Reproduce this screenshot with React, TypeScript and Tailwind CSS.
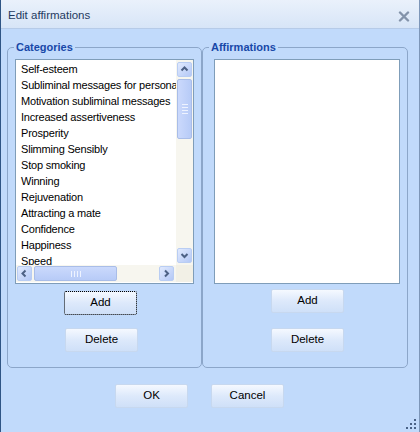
import React from "react";

const CATEGORIES = [
  "Self-esteem",
  "Subliminal messages for personal growth",
  "Motivation subliminal messages",
  "Increased assertiveness",
  "Prosperity",
  "Slimming Sensibly",
  "Stop smoking",
  "Winning",
  "Rejuvenation",
  "Attracting a mate",
  "Confidence",
  "Happiness",
  "Speed",
];

const FONT = "font-['Tahoma','Liberation_Sans',sans-serif]";

function Arrow({ dir }: { dir: "up" | "down" | "left" | "right" }) {
  const paths: Record<string, string> = {
    up: "M2.5 6.5 L5.5 3.5 L8.5 6.5",
    down: "M2.5 4 L5.5 7 L8.5 4",
    left: "M6.5 2.5 L3.5 5.5 L6.5 8.5",
    right: "M4 2.5 L7 5.5 L4 8.5",
  };
  return (
    <svg width="11" height="11" viewBox="0 0 11 11">
      <path d={paths[dir]} fill="none" stroke="#4d6185" strokeWidth="2" />
    </svg>
  );
}

function ScrollBtn({ dir }: { dir: "up" | "down" | "left" | "right" }) {
  return (
    <div className="w-[15px] h-[15px] shrink-0 flex items-center justify-center rounded-[2px] border border-[#b9cdf3] bg-gradient-to-br from-[#e1eafe] to-[#b4c8f6]">
      <Arrow dir={dir} />
    </div>
  );
}

function Button({ label, focused }: { label: string; focused?: boolean }) {
  return (
    <button
      className={`block w-[73px] h-[24px] shrink-0 rounded-[2px] border border-[#c7d8ef] bg-gradient-to-b from-[#f5f9ff] via-[#dde9fb] to-[#cfe0f8] text-[11.5px] text-black ${FONT} ${
        focused ? "outline outline-1 outline-dotted outline-black -outline-offset-1" : ""
      }`}
    >
      {label}
    </button>
  );
}

function Group({
  title,
  children,
}: {
  title: string;
  children: React.ReactNode;
}) {
  return (
    <fieldset className="h-[328px] border border-[#8ca6c9] rounded-[5px] px-0">
      <legend
        className={`ml-[6px] px-[2px] text-[11px] leading-[14px] font-bold text-[#1848a8] ${FONT}`}
      >
        {title}
      </legend>
      {children}
    </fieldset>
  );
}

export default function App() {
  return (
    <div className="w-[420px] h-[432px] flex flex-col bg-[#c1dafb] border-l border-l-[#2f5585] border-r border-r-[#7d96b8] overflow-hidden relative">
      {/* title bar */}
      <div className="h-[29px] shrink-0 flex items-center justify-between pt-[4px] pl-[7px] pr-[9px] bg-gradient-to-b from-[#eaf1fb] to-[#d7e5f7] border-b border-[#b6cbe8]">
        <span className={`text-[11.5px] text-[#1f3a60] ${FONT}`}>
          Edit affirmations
        </span>
        <svg width="12" height="11" viewBox="0 0 12 11">
          <path
            d="M2 1.5 L10 9.5 M10 1.5 L2 9.5"
            stroke="#8393aa"
            strokeWidth="2.4"
            strokeLinecap="round"
          />
        </svg>
      </div>

      <div className="flex pl-[6px] pr-[11px] pt-[11px]">
        <div className="w-[195px]">
          <Group title="Categories">
            <div className="flex flex-col items-start pl-[7px]">
              <div className="mt-[5px] w-[179px] h-[225px] border border-[#7f9db9] bg-white flex flex-col">
                <div className="flex h-[205px]">
                  <div
                    className={`w-[160px] overflow-hidden pl-[5px] pt-[1px] text-[11px] tracking-[-0.2px] leading-[16px] text-black ${FONT}`}
                  >
                    {CATEGORIES.map((c) => (
                      <div key={c} className="whitespace-nowrap h-[16px]">
                        {c}
                      </div>
                    ))}
                  </div>
                  <div className="w-[17px] bg-[#f7f6ef] flex flex-col items-center pt-[2px] pb-[2px]">
                    <ScrollBtn dir="up" />
                    <div className="mt-[2px] w-[15px] h-[60px] rounded-[2px] border border-[#a9bde8] bg-gradient-to-r from-[#cbd9fc] to-[#b7cbf7] flex flex-col items-center justify-center gap-[2px]">
                      <div className="w-[6px] h-[1px] bg-[#eef3ff]" />
                      <div className="w-[6px] h-[1px] bg-[#eef3ff]" />
                      <div className="w-[6px] h-[1px] bg-[#eef3ff]" />
                      <div className="w-[6px] h-[1px] bg-[#eef3ff]" />
                    </div>
                    <div className="flex-1" />
                    <ScrollBtn dir="down" />
                  </div>
                </div>
                <div className="flex h-[17px] bg-[#f7f6ef] items-center">
                  <div className="w-[160px] flex items-center pl-[1px] pr-[2px]">
                    <ScrollBtn dir="left" />
                    <div className="ml-[2px] w-[83px] h-[15px] rounded-[2px] border border-[#a9bde8] bg-gradient-to-b from-[#cbd9fc] to-[#b7cbf7] flex items-center justify-center gap-[2px]">
                      <div className="w-[1px] h-[6px] bg-[#eef3ff]" />
                      <div className="w-[1px] h-[6px] bg-[#eef3ff]" />
                      <div className="w-[1px] h-[6px] bg-[#eef3ff]" />
                      <div className="w-[1px] h-[6px] bg-[#eef3ff]" />
                    </div>
                    <div className="flex-1" />
                    <ScrollBtn dir="right" />
                  </div>
                  <div className="w-[17px] h-full bg-[#f2f0e6]" />
                </div>
              </div>
              <div className="mt-[7px] ml-[49px]">
                <Button label="Add" focused />
              </div>
              <div className="mt-[13px] ml-[50px]">
                <Button label="Delete" />
              </div>
            </div>
          </Group>
        </div>
        <div className="w-[206px]">
          <Group title="Affirmations">
            <div className="flex flex-col items-start pl-[11px]">
              <div className="mt-[5px] w-[186px] h-[225px] border border-[#7f9db9] bg-white" />
              <div className="mt-[5px] ml-[57px]">
                <Button label="Add" />
              </div>
              <div className="mt-[15px] ml-[57px]">
                <Button label="Delete" />
              </div>
            </div>
          </Group>
        </div>
      </div>

      <div className="flex pl-[114px] gap-[23px] mt-[16px]">
        <Button label="OK" />
        <Button label="Cancel" />
      </div>

      {/* resize grip */}
      <svg
        className="absolute right-[2px] bottom-[2px]"
        width="12"
        height="12"
        viewBox="0 0 12 12"
      >
        {[
          [10, 2],
          [10, 6],
          [6, 6],
          [10, 10],
          [6, 10],
          [2, 10],
        ].map(([x, y], i) => (
          <rect key={i} x={x - 1} y={y - 1} width="2" height="2" fill="#4a6286" />
        ))}
      </svg>
    </div>
  );
}
